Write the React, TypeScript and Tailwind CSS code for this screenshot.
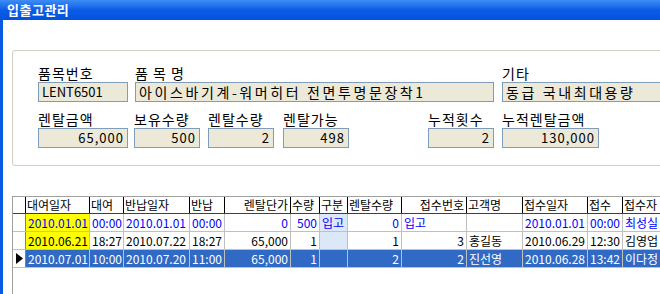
import React from "react";

const font = { fontFamily: '"Noto Sans CJK KR", "Noto Sans", sans-serif' };

type Col = { h: string; w: string; hr?: boolean };

const cols: Col[] = [
    { h: "대여일자", w: "w-[64px]" },
    { h: "대여", w: "w-[34px]" },
    { h: "반납일자", w: "w-[66px]" },
    { h: "반납", w: "w-[35px]" },
    { h: "렌탈단가", w: "w-[66px]", hr: true },
    { h: "수량", w: "w-[29px]" },
    { h: "구분", w: "w-[28px]" },
    { h: "렌탈수량", w: "w-[54px]" },
    { h: "접수번호", w: "w-[65px]", hr: true },
    { h: "고객명", w: "w-[56px]" },
    { h: "접수일자", w: "w-[65px]" },
    { h: "접수", w: "w-[35px]" },
    { h: "접수자", w: "w-[80px]" },
];

const rows = [
    { kind: "in", cells: ["2010.01.01", "00:00", "2010.01.01", "00:00", "0", "500", "입고", "0", "입고", "", "2010.01.01", "00:00", "최성실"] },
    { kind: "normal", cells: ["2010.06.21", "18:27", "2010.07.22", "18:27", "65,000", "1", "", "1", "3", "홍길동", "2010.06.29", "12:30", "김영업"] },
    { kind: "sel", cells: ["2010.07.01", "10:00", "2010.07.20", "11:00", "65,000", "1", "", "2", "2", "진선영", "2010.06.28", "13:42", "이다정"] },
];

function Field({ w, value, right, wide }: { w: string; value: string; right?: boolean; wide?: boolean }) {
    return (
        <div
            className={`${w} h-[20px] shrink-0 border border-[#7f9db9] bg-[#ece9d8] leading-[18px] text-black whitespace-nowrap overflow-hidden ${wide ? "text-[14px] tracking-[2.6px]" : right ? "text-[13px] tracking-[1px]" : "text-[13px]"} ${right ? "text-right pr-[3px]" : "pl-[3px]"}`}
        >
            {value}
        </div>
    );
}

function Label({ w, text }: { w: string; text: string }) {
    return <div className={`${w} shrink-0 h-[14px] text-[14px] leading-[14px] tracking-[1px] text-black whitespace-nowrap`}>{text}</div>;
}

export default function App() {
    return (
        <div className="w-[660px] h-[294px] overflow-hidden bg-white flex flex-col" style={font}>
            <div className="h-[20px] shrink-0 bg-gradient-to-b from-[#3d8cf6] via-[#0a5ce8] to-[#0452de] flex items-center pl-[7px]">
                <span className="text-white font-bold text-[13px] leading-[14px] tracking-[0.5px]">입출고관리</span>
            </div>
            <div className="flex flex-1">
                <div className="w-[3px] shrink-0 bg-[#0a5ae6]" />
                <div className="flex-1 flex flex-col pl-[9px]">
                    {/* group box */}
                    <div className="mt-[30px] w-[700px] h-[116px] shrink-0 border border-[#d0d0bf] rounded-[3px] pl-[25px] pt-[15px]">
                        <div className="flex">
                            <Label w="w-[97px]" text="품목번호" />
                            <Label w="w-[367px]" text="품 목 명" />
                            <Label w="w-[160px]" text="기타" />
                        </div>
                        <div className="flex mt-[2px]">
                            <Field w="w-[90px]" value="LENT6501" />
                            <div className="w-[7px] shrink-0" />
                            <Field w="w-[359px]" value="아이스바기계-워머히터 전면투명문장착1" wide />
                            <div className="w-[8px] shrink-0" />
                            <Field w="w-[170px]" value="동급 국내최대용량" wide />
                        </div>
                        <div className="flex mt-[10px]">
                            <Label w="w-[96px]" text="렌탈금액" />
                            <Label w="w-[74px]" text="보유수량" />
                            <Label w="w-[75px]" text="렌탈수량" />
                            <Label w="w-[145px]" text="렌탈가능" />
                            <Label w="w-[74px]" text="누적횟수" />
                            <Label w="w-[100px]" text="누적렌탈금액" />
                        </div>
                        <div className="flex mt-[2px]">
                            <Field w="w-[90px]" value="65,000" right />
                            <div className="w-[6px] shrink-0" />
                            <Field w="w-[66px]" value="500" right />
                            <div className="w-[8px] shrink-0" />
                            <Field w="w-[66px]" value="2" right />
                            <div className="w-[9px] shrink-0" />
                            <Field w="w-[66px]" value="498" right />
                            <div className="w-[79px] shrink-0" />
                            <Field w="w-[66px]" value="2" right />
                            <div className="w-[8px] shrink-0" />
                            <Field w="w-[97px]" value="130,000" right />
                        </div>
                    </div>

                    {/* grid */}
                    <div className="mt-[30px] flex-1 w-[720px] border-l border-t border-[#a0a0a0] text-[12px] leading-[16px]">
                        <div className="flex h-[17px] border-b border-[#404040]">
                            <div className="w-[13px] shrink-0 border-r border-black" />
                            {cols.map((c) => (
                                <div
                                    key={c.h}
                                    className={`${c.w} shrink-0 border-r border-black pl-[1px] pr-[2px] whitespace-nowrap overflow-hidden text-black ${c.hr ? "text-right" : ""}`}
                                >
                                    {c.h}
                                </div>
                            ))}
                        </div>
                        {rows.map((r, ri) => {
                            const sel = r.kind === "sel";
                            return (
                                <div key={ri} className="flex h-[18px] border-b border-[#c0c0c0]">
                                    <div className="w-[13px] shrink-0 border-r border-[#808080] bg-white flex items-center justify-center">
                                        {sel && (
                                            <svg width="7" height="11" viewBox="0 0 7 11">
                                                <path d="M0 0 L7 5.5 L0 11 Z" fill="#000" />
                                            </svg>
                                        )}
                                    </div>
                                    {r.cells.map((v, ci) => {
                                        const num = /^[\d,]+$/.test(v);
                                        let bg = "bg-white";
                                        if (sel) bg = "bg-[#316ac5]";
                                        else if (ci === 0) bg = "bg-[#ffff00]";
                                        else if (ci === 6) bg = "bg-[#dce8f8]";
                                        const color = sel ? "text-white" : r.kind === "in" ? "text-[#0000ff]" : "text-black";
                                        return (
                                            <div
                                                key={ci}
                                                className={`${cols[ci].w} shrink-0 border-r border-[#c0c0c0] px-[2px] leading-[17px] whitespace-nowrap overflow-hidden ${bg} ${color} ${num ? "text-right" : ""}`}
                                            >
                                                {v}
                                            </div>
                                        );
                                    })}
                                </div>
                            );
                        })}
                    </div>
                </div>
            </div>
        </div>
    );
}
